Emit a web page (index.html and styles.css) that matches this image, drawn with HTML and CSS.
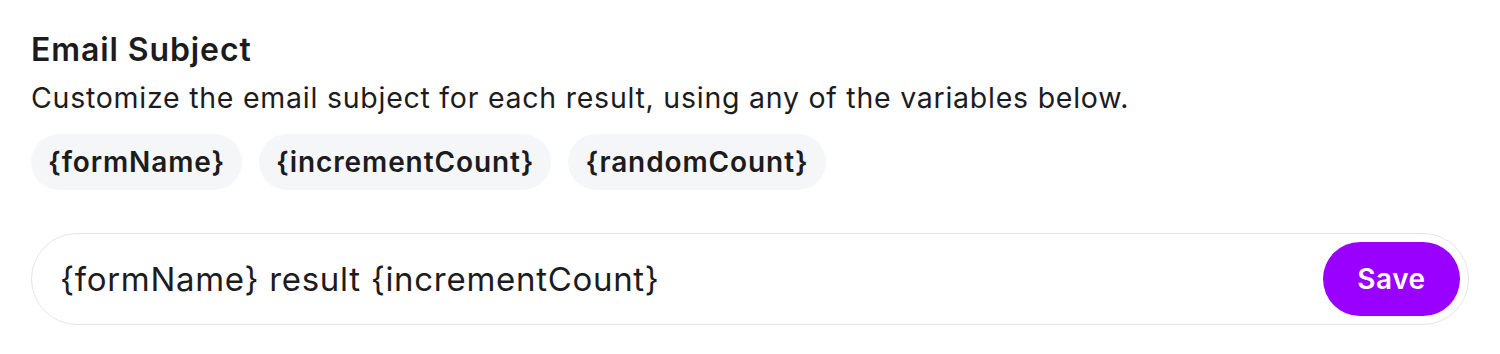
FILE: index.html
```html
<!DOCTYPE html>
<html>
<head>
<meta charset="utf-8">
<link rel="stylesheet" href="styles.css">
</head>
<body>
<section class="field">
  <h2 class="title">Email Subject</h2>
  <p class="desc">Customize the email subject for each result, using any of the variables below.</p>
  <div class="chips">
    <span class="chip">{formName}</span>
    <span class="chip">{incrementCount}</span>
    <span class="chip">{randomCount}</span>
  </div>
  <div class="input">
    <span class="value">{formName} result {incrementCount}</span>
    <button class="save">Save</button>
  </div>
</section>
</body>
</html>
```
FILE: styles.css
```css
html, body { margin: 0; padding: 0; background: #fff; }
body { font-family: Inter, "Noto Sans", sans-serif; color: #1c1c1e; }
.field { padding: 31px 31px 0 31px; }
.title { margin: 0; font-size: 32px; font-weight: 600; line-height: 38px; letter-spacing: 0.9px; }
.desc { margin: 11px 0 0 0; font-size: 28.5px; font-weight: 400; line-height: 36px; letter-spacing: 0.75px; }
.chips { display: flex; gap: 17px; margin-top: 18px; }
.chip { background: #f5f6f8; border-radius: 28px; height: 56px; padding: 0 17px; display: flex; align-items: center; font-size: 28px; font-weight: 600; letter-spacing: 0.9px; }
.input { margin-top: 43px; border: 1.5px solid #e4e4ec; border-radius: 46px; height: 90px; display: flex; align-items: center; justify-content: space-between; padding: 0 8px 0 28px; }
.value { font-size: 33px; letter-spacing: 0.7px; }
.save { background: #9900ff; color: #fff; border: none; border-radius: 37px; height: 74px; width: 137px; font-family: Inter, sans-serif; font-size: 28px; font-weight: 600; letter-spacing: 0.5px; }
```
